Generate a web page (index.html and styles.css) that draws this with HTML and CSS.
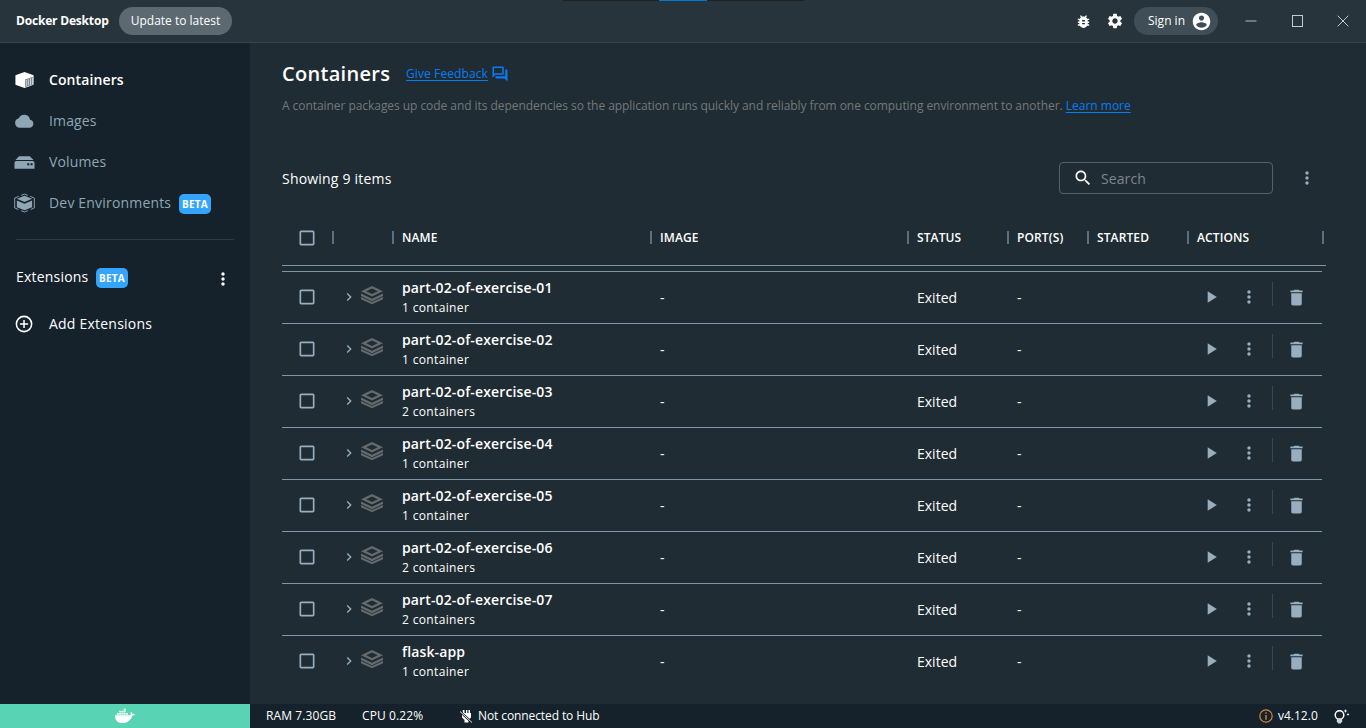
FILE: index.html
```html
<!DOCTYPE html>
<html lang="en">
<head>
<meta charset="utf-8">
<title>Docker Desktop</title>
<link rel="stylesheet" href="styles.css">
</head>
<body>
<svg class="sprite" aria-hidden="true">
  <symbol id="box" viewBox="0 0 24 24"><path d="M19 5v14H5V5h14m0-2H5c-1.1 0-2 .9-2 2v14c0 1.1.9 2 2 2h14c1.1 0 2-.9 2-2V5c0-1.100-.9-2-2-2z"/></symbol>
  <symbol id="dots" viewBox="0 0 24 24"><path d="M12 8c1.100 0 2-.9 2-2s-.9-2-2-2-2 .9-2 2 .9 2 2 2zm0 2c-1.100 0-2 .9-2 2s.9 2 2 2 2-.9 2-2-.9-2-2-2zm0 6c-1.100 0-2 .9-2 2s.9 2 2 2 2-.9 2-2-.9-2-2-2z"/></symbol>
  <symbol id="chev" viewBox="0 0 24 24"><path d="M10 6 8.590 7.410 13.170 12l-4.580 4.590L10 18l6-6z"/></symbol>
  <symbol id="play" viewBox="0 0 24 24"><path d="M8 5v14l11-7z"/></symbol>
  <symbol id="trash" viewBox="0 0 24 24"><path d="M6 19c0 1.100.9 2 2 2h8c1.100 0 2-.9 2-2V7H6v12zM19 4h-3.500l-1-1h-5l-1 1H5v2h14V4z"/></symbol>
  <symbol id="stack" viewBox="0 0 22 18"><path fill-rule="evenodd" d="M11 0 22 5.300 11 10.600 0 5.300zM11 2.500 5.200 5.300 11 8.100l5.800-2.800z"/><path d="M0 7.600v2.300L11 15.200l11-5.300V7.600l-11 5.200zM0 10.900v2.300L11 18.200l11-5v-2.300l-11 5.200z"/></symbol>
</svg>
<header class="topbar">
  <strong class="brand">Docker Desktop</strong>
  <button class="update">Update to latest</button>
  <div class="tab-strip"><i></i></div>
  <div class="tools">
    <svg class="i16" viewBox="0 0 24 24"><path d="M20 8h-2.810c-.45-.78-1.070-1.450-1.820-1.960L17 4.410 15.590 3l-2.170 2.170C12.960 5.060 12.490 5 12 5s-.96.06-1.410.17L8.410 3 7 4.410l1.620 1.630C7.880 6.550 7.260 7.220 6.810 8H4v2h2.090c-.05.33-.09.66-.09 1v1H4v2h2v1c0 .34.040.67.090 1H4v2h2.810c1.040 1.790 2.970 3 5.190 3s4.150-1.210 5.190-3H20v-2h-2.090c.05-.33.090-.66.090-1v-1h2v-2h-2v-1c0-.34-.04-.67-.09-1H20V8zm-6 8h-4v-2h4v2zm0-4h-4v-2h4v2z"/></svg>
    <svg class="i18" viewBox="0 0 24 24"><path d="M19.140 12.940c.04-.3.060-.61.060-.94 0-.32-.02-.64-.07-.94l2.030-1.580c.18-.14.230-.41.120-.61l-1.920-3.320c-.12-.22-.37-.29-.59-.22l-2.390.96c-.5-.38-1.030-.7-1.620-.94l-.36-2.540c-.04-.24-.24-.41-.48-.41h-3.840c-.24 0-.43.170-.47.410l-.36 2.540c-.59.240-1.130.57-1.620.94l-2.390-.96c-.22-.08-.47 0-.59.220L2.740 8.870c-.12.210-.08.470.12.610l2.030 1.580c-.05.300-.09.630-.09.940s.02.640.07.940l-2.030 1.580c-.18.140-.23.410-.12.610l1.920 3.320c.12.220.37.290.59.220l2.390-.96c.5.380 1.030.7 1.620.94l.36 2.540c.05.240.24.410.48.410h3.840c.24 0 .44-.17.470-.41l.36-2.540c.59-.24 1.130-.56 1.620-.94l2.390.96c.22.080.47 0 .59-.22l1.920-3.320c.12-.22.070-.47-.12-.61l-2.010-1.580zM12 15.600c-1.980 0-3.600-1.620-3.600-3.600s1.620-3.600 3.600-3.600 3.600 1.620 3.600 3.600-1.620 3.600-3.600 3.600z"/></svg>
    <button class="signin"><span>Sign in</span><svg class="i21" viewBox="0 0 24 24"><path d="M12 2C6.480 2 2 6.480 2 12s4.480 10 10 10 10-4.480 10-10S17.520 2 12 2zm0 3c1.660 0 3 1.340 3 3s-1.340 3-3 3-3-1.340-3-3 1.340-3 3-3zm0 14.200c-2.500 0-4.710-1.280-6-3.220.03-1.990 4-3.080 6-3.080 1.990 0 5.970 1.090 6 3.080-1.290 1.940-3.500 3.220-6 3.220z"/></svg></button>
  </div>
  <div class="window-buttons">
    <svg viewBox="0 0 12 12"><path d="M.5 6H11.500" stroke-width="1.400" opacity=".65"/></svg>
    <svg viewBox="0 0 12 12"><path d="M1 .5h10.500v10.500H1z" shape-rendering="crispEdges"/></svg>
    <svg viewBox="0 0 12 12"><path d="M.7.700 11.300 11.300M11.300.700.7 11.300"/></svg>
  </div>
</header>
<div class="body">
  <nav class="sidebar">
    <a class="item active"><svg viewBox="0 0 22 20"><path d="M11 1.500 20.500 5v10L11 18.500 1.500 15V5z"/><path fill="#788891" d="M11.500 9.500 20 6.500v8.200l-8.500 3z"/><path d="M12.800 10v6.500M15 9.200v6.600M17.300 8.400V15M19.300 7.600v6.800" stroke="#fff" stroke-width=".7"/></svg><span>Containers</span></a>
    <a class="item"><svg viewBox="0 0 22 20"><path d="M5.500 17A5 5 0 0 1 5 7.200 6.200 6.200 0 0 1 16.800 8.600 4.300 4.300 0 0 1 17 17z"/></svg><span>Images</span></a>
    <a class="item"><svg viewBox="0 0 22 20"><path d="M5.300 4h11.200l4 4H1.500z"/><path fill-rule="evenodd" d="M2.500 9h17a2 2 0 0 1 2 2v6H.5v-6a2 2 0 0 1 2-2zm11.300 2.300v2.200H16v-2.200zm3.500 0v2.200h2.200v-2.200z"/></svg><span>Volumes</span></a>
    <a class="item"><svg viewBox="0 0 22 20"><path d="M3 5.500 11 2.500l8 3-8 3.400zM3 7.400l8 3.500 8-3.500v7L11 17.600l-8-3.200z"/><path fill="none" stroke="currentColor" stroke-width="1" d="M7.500 2 11 .6 14.500 2M17 3l4.300 1.800v10.400L17.500 16.800M5 3 .7 4.800v10.400l3.800 1.600M7.500 18l3.500 1.400L14.500 18"/></svg><span class="dev">Dev Environments</span><b class="beta">BETA</b></a>
    <hr>
    <div class="ext"><span>Extensions</span><b class="beta">BETA</b><svg class="i20"><use href="#dots"/></svg></div>
    <a class="item add"><svg viewBox="0 0 22 20"><g fill="none" stroke="currentColor" stroke-width="1.600"><circle cx="10.500" cy="10" r="8"/><path d="M10.500 5.700v8.600M6.200 10h8.600"/></g></svg><span>Add Extensions</span></a>
  </nav>
  <main class="main">
    <div class="title"><h1>Containers</h1><a class="feedback">Give Feedback</a><svg class="chat" viewBox="0 0 24 24"><path d="M15 4v7H5.170L4 12.170V4h11m1-2H3c-.55 0-1 .45-1 1v14l4-4h10c.55 0 1-.45 1-1V3c0-.55-.45-1-1-1zm5 4h-2v9H6v2c0 .55.450 1 1 1h11l4 4V7c0-.55-.45-1-1-1z"/></svg></div>
    <p class="intro"><span>A container packages up code and its dependencies so the application runs quickly and reliably from one computing environment to another.</span> <a>Learn more</a></p>
    <div class="filter"><span class="count">Showing 9 items</span><label class="search"><svg class="i20" viewBox="0 0 24 24"><path d="M15.500 14h-.79l-.28-.27C15.410 12.590 16 11.110 16 9.500 16 5.910 13.090 3 9.500 3S3 5.910 3 9.500 5.910 16 9.500 16c1.610 0 3.090-.59 4.230-1.570l.27.28v.79l5 4.990L20.490 19l-4.990-5zm-6 0C7.010 14 5 11.990 5 9.500S7.010 5 9.500 5 14 7.010 14 9.500 11.990 14 9.500 14z"/></svg><span>Search</span></label><svg class="i20 muted"><use href="#dots"/></svg></div>
    <div class="thead">
      <div class="center"><svg class="i20 muted"><use href="#box"/></svg></div><div></div><div><span>NAME</span></div><div><span>IMAGE</span></div><div><span>STATUS</span></div><div><span>PORT(S)</span></div><div><span>STARTED</span></div><div><span>ACTIONS</span></div>
    </div>
    <div class="rows">
      <div class="row"><svg class="i20 check"><use href="#box"/></svg><div class="expand"><svg class="chev"><use href="#chev"/></svg><svg class="stack"><use href="#stack"/></svg></div><div class="name"><b>part-02-of-exercise-01</b><span>1 container</span></div><div class="dash">-</div><div class="status">Exited</div><div class="dash">-</div><div></div><div class="actions"><svg class="i20"><use href="#play"/></svg><svg class="i20 more"><use href="#dots"/></svg><i></i><svg class="bin"><use href="#trash"/></svg></div></div>
      <div class="row"><svg class="i20 check"><use href="#box"/></svg><div class="expand"><svg class="chev"><use href="#chev"/></svg><svg class="stack"><use href="#stack"/></svg></div><div class="name"><b>part-02-of-exercise-02</b><span>1 container</span></div><div class="dash">-</div><div class="status">Exited</div><div class="dash">-</div><div></div><div class="actions"><svg class="i20"><use href="#play"/></svg><svg class="i20 more"><use href="#dots"/></svg><i></i><svg class="bin"><use href="#trash"/></svg></div></div>
      <div class="row"><svg class="i20 check"><use href="#box"/></svg><div class="expand"><svg class="chev"><use href="#chev"/></svg><svg class="stack"><use href="#stack"/></svg></div><div class="name"><b>part-02-of-exercise-03</b><span>2 containers</span></div><div class="dash">-</div><div class="status">Exited</div><div class="dash">-</div><div></div><div class="actions"><svg class="i20"><use href="#play"/></svg><svg class="i20 more"><use href="#dots"/></svg><i></i><svg class="bin"><use href="#trash"/></svg></div></div>
      <div class="row"><svg class="i20 check"><use href="#box"/></svg><div class="expand"><svg class="chev"><use href="#chev"/></svg><svg class="stack"><use href="#stack"/></svg></div><div class="name"><b>part-02-of-exercise-04</b><span>1 container</span></div><div class="dash">-</div><div class="status">Exited</div><div class="dash">-</div><div></div><div class="actions"><svg class="i20"><use href="#play"/></svg><svg class="i20 more"><use href="#dots"/></svg><i></i><svg class="bin"><use href="#trash"/></svg></div></div>
      <div class="row"><svg class="i20 check"><use href="#box"/></svg><div class="expand"><svg class="chev"><use href="#chev"/></svg><svg class="stack"><use href="#stack"/></svg></div><div class="name"><b>part-02-of-exercise-05</b><span>1 container</span></div><div class="dash">-</div><div class="status">Exited</div><div class="dash">-</div><div></div><div class="actions"><svg class="i20"><use href="#play"/></svg><svg class="i20 more"><use href="#dots"/></svg><i></i><svg class="bin"><use href="#trash"/></svg></div></div>
      <div class="row"><svg class="i20 check"><use href="#box"/></svg><div class="expand"><svg class="chev"><use href="#chev"/></svg><svg class="stack"><use href="#stack"/></svg></div><div class="name"><b>part-02-of-exercise-06</b><span>2 containers</span></div><div class="dash">-</div><div class="status">Exited</div><div class="dash">-</div><div></div><div class="actions"><svg class="i20"><use href="#play"/></svg><svg class="i20 more"><use href="#dots"/></svg><i></i><svg class="bin"><use href="#trash"/></svg></div></div>
      <div class="row"><svg class="i20 check"><use href="#box"/></svg><div class="expand"><svg class="chev"><use href="#chev"/></svg><svg class="stack"><use href="#stack"/></svg></div><div class="name"><b>part-02-of-exercise-07</b><span>2 containers</span></div><div class="dash">-</div><div class="status">Exited</div><div class="dash">-</div><div></div><div class="actions"><svg class="i20"><use href="#play"/></svg><svg class="i20 more"><use href="#dots"/></svg><i></i><svg class="bin"><use href="#trash"/></svg></div></div>
      <div class="row"><svg class="i20 check"><use href="#box"/></svg><div class="expand"><svg class="chev"><use href="#chev"/></svg><svg class="stack"><use href="#stack"/></svg></div><div class="name"><b>flask-app</b><span>1 container</span></div><div class="dash">-</div><div class="status">Exited</div><div class="dash">-</div><div></div><div class="actions"><svg class="i20"><use href="#play"/></svg><svg class="i20 more"><use href="#dots"/></svg><i></i><svg class="bin"><use href="#trash"/></svg></div></div>
    </div>
  </main>
</div>
<footer class="footer">
  <div class="engine"><svg viewBox="0 0 20 14"><path d="M0 6.200h14.700c.7-.3 1-.8.900-1.500-.2-.8-.1-1.300.4-1.900.8.500 1.200 1.200 1.200 2 1-.2 2 0 2.800.5-.5 1-1.500 1.400-2.700 1.400C16 11.300 12.500 14 7.500 14 2.500 14-.1 11.200 0 6.200z"/><path opacity=".85" d="M1.800 3.900h2v1.900h-2zM4.100 3.900h2v1.900h-2zM6.400 3.900h2v1.900h-2zM8.700 3.900h2v1.900h-2zM11 3.900h2v1.900h-2zM4.100 1.700h2v1.900h-2zM6.400 1.700h2v1.900h-2zM8.700 1.700h2v1.900h-2zM8.700-.5h2v1.900h-2z"/></svg></div>
  <span class="ram">RAM 7.30GB</span><span class="cpu">CPU 0.22%</span>
  <svg class="plug" viewBox="0 0 12 13"><path d="M2.800 0h1.700v3H6V0h1.300v3H8.500V0H10v3h1v4.500L8.500 10v2.500h-4V10L2 7.500V3h.8z"/><path stroke="#15222b" stroke-width="2.200" d="M0 1.500 12 12.500"/><path stroke="#fff" stroke-width=".9" d="M0 1.500 12 12.500"/></svg>
  <span class="hub">Not connected to Hub</span>
  <div class="version"><svg class="info" viewBox="0 0 14 14"><circle cx="7" cy="7" r="6.200" fill="none" stroke="currentColor" stroke-width="1.200"/><path d="M6.300 3.300h1.400v1.400H6.300zM6.300 6h1.400v4.700H6.300z"/></svg><span class="ver">v4.12.0</span><svg class="tips" viewBox="0 0 16 15"><circle cx="5.500" cy="6" r="4.300" fill="none" stroke="#fff" stroke-width="1.500"/><path fill="#ccd2d6" d="M2.800 9.500h5.400v3l-1.500 2H4.300l-1.500-2z"/><path d="m11.500 0 .6 1.400 1.400.6-1.400.6-.6 1.400-.6-1.400L9.500 2l1.400-.6zM14 4l.5 1 .9.400-.9.500-.5.900-.5-.9-.9-.5.9-.4z"/></svg></div>
</footer>
</body>
</html>
```
FILE: styles.css
```css
* { box-sizing: border-box; }
body { margin: 0; width: 1366px; height: 728px; display: flex; flex-direction: column; overflow: hidden; background: #202c33; color: #fff; font-family: "Open Sans", sans-serif; font-size: 14px; line-height: 20px; }
svg { display: block; flex: none; fill: currentColor; }
span, b, strong { white-space: nowrap; }
button { border: 0; margin: 0; font: inherit; color: inherit; }
.sprite { position: absolute; width: 0; height: 0; }
.i16 { width: 17px; height: 17px; }
.i18 { width: 18px; height: 18px; }
.i20 { width: 20px; height: 20px; }
.i21 { width: 21px; height: 21px; }
.muted { color: #96aebd; }

.topbar { position: relative; height: 43px; flex: none; display: flex; align-items: center; background: #27343c; border-bottom: 1px solid #36454d; padding-left: 16px; font-size: 12px; }
.brand { width: 103px; font-weight: 700; letter-spacing: -.19px; }
.update { width: 113px; height: 28px; padding: 0; border-radius: 14px; background: #5c6971; text-align: center; }
.tab-strip { position: absolute; left: 563px; top: 0; width: 241px; height: 1px; background: #202020; }
.tab-strip i { display: block; width: 48px; height: 1px; margin-left: 96px; background: #0078d4; }
.tools { margin-left: auto; display: flex; align-items: center; }
.tools .i18 { margin-left: 14px; }
.signin { display: flex; align-items: center; justify-content: space-between; width: 84px; height: 28px; margin-left: 10px; padding: 0 6px 0 14px; border-radius: 14px; background: #404e57; }
.window-buttons { display: flex; gap: 34px; margin: 0 17px 0 27px; }
.window-buttons svg { width: 12px; height: 12px; fill: none; stroke: #c5cacd; stroke-width: 1; }

.body { flex: 1; display: flex; min-height: 0; }
.sidebar { width: 250px; flex: none; padding-top: 16px; background: #15222b; }
.item { display: flex; align-items: center; height: 41px; padding-left: 14px; color: #8fa6b4; letter-spacing: .15px; }
.item svg { width: 21px; height: 20px; margin-right: 14px; }
.item.active { color: #fff; font-weight: 600; letter-spacing: .1px; }
.item.add { color: #fff; margin-top: 16px; letter-spacing: .22px; }
.dev { width: 122px; margin-right: 8px; letter-spacing: .18px; }
.beta { width: 32px; height: 20px; margin-top: 2px; border-radius: 5px; background: #35a5fb; color: #fff; font-size: 10px; line-height: 21px; font-weight: 700; text-align: center; letter-spacing: .2px; }
hr { height: 1px; margin: 16px 16px 0; border: 0; background: #2c3a42; }
.ext { display: flex; align-items: center; height: 20px; margin: 27px 16px 0; }
.ext span { width: 72px; letter-spacing: .2px; }
.ext .beta { margin-left: 8px; }
.ext svg { margin: 3px 1px 0 auto; }

.main { width: 1116px; padding-left: 32px; }
.title { display: flex; align-items: center; height: 30px; margin-top: 16px; }
h1 { width: 124px; margin: 0; font-size: 20px; line-height: 30px; font-weight: 600; letter-spacing: .3px; }
.feedback, .intro a { color: #087cf5; text-decoration: underline; text-underline-offset: 2px; font-size: 12px; white-space: nowrap; }
.feedback { width: 82px; letter-spacing: .1px; }
.chat { width: 18px; height: 18px; margin-left: 3px; color: #087cf5; }
.intro { margin: 7px 0 0; font-size: 12px; line-height: 20px; color: #737879; white-space: nowrap; }
.intro span { letter-spacing: -.057px; }
.filter { display: flex; align-items: center; height: 32px; margin-top: 46px; }
.count { padding-top: 2px; letter-spacing: .2px; }
.search { display: flex; align-items: center; width: 214px; height: 32px; margin-left: auto; padding-left: 13px; border: 1px solid #556067; border-radius: 4px; }
.search span { margin-left: 8px; padding-top: 2px; color: #7d868b; letter-spacing: .1px; }
.filter > .muted { margin: 0 49px 0 24px; }
.thead, .row { display: grid; grid-template-columns: 52px 60px 258px 257px 100px 80px 100px 135px; align-items: center; }
.thead { width: 1044px; height: 56px; margin-top: 16px; border-bottom: 1px solid #7f97a5; font-size: 12px; font-weight: 600; letter-spacing: .12px; }
.thead > div { height: 13px; display: flex; align-items: center; padding-left: 8px; border-right: 2px solid #587082; }
.thead > div.center { padding-left: 15px; }
.rows { width: 1040px; margin-top: 5px; border-top: 1px solid #7f97a5; }
.row { height: 52px; border-bottom: 1px solid #7f97a5; overflow: hidden; }
.row:last-child { border-bottom-color: transparent; }
.row > * { min-width: 0; }
.check { margin: -1px 0 0 15px; color: #96aebd; }
.expand { display: flex; align-items: center; padding-left: 7px; margin-top: -1px; }
.chev { width: 16px; height: 16px; color: #96aebd; }
.stack { width: 22px; height: 18px; margin: -4px 0 0 4px; color: #656b6d; }
.name { display: flex; flex-direction: column; padding-left: 8px; font-size: 12px; line-height: 19px; letter-spacing: .35px; }
.name b { font-size: 14px; line-height: 20px; font-weight: 600; letter-spacing: .13px; }
.dash { padding-left: 8px; }
.status { padding-left: 8px; }
.actions { display: flex; align-items: center; padding-left: 12px; margin-top: -1px; color: #96aebd; }
.actions .more { margin-left: 18px; }
.actions i { width: 1px; height: 24px; margin: -6px 13px 0 13px; background: #3a474f; }
.bin { width: 21px; height: 21px; }

.footer { height: 24px; flex: none; display: flex; align-items: center; background: #15222b; font-size: 12px; }
.engine { width: 250px; height: 24px; display: flex; align-items: center; justify-content: center; background: #58d3b4; }
.engine svg { width: 20px; height: 14px; overflow: visible; }
.ram { width: 96px; margin-left: 16px; letter-spacing: .1px; }
.cpu { width: 98px; letter-spacing: .1px; }
.plug { width: 12px; height: 13px; margin-right: 6px; }
.hub { letter-spacing: -.1px; }
.version { display: flex; align-items: center; margin: 0 16px 0 auto; }
.info { width: 14px; height: 14px; color: #d5853f; }
.ver { width: 56px; margin-left: 5px; }
.tips { width: 16px; height: 15px; }
```
